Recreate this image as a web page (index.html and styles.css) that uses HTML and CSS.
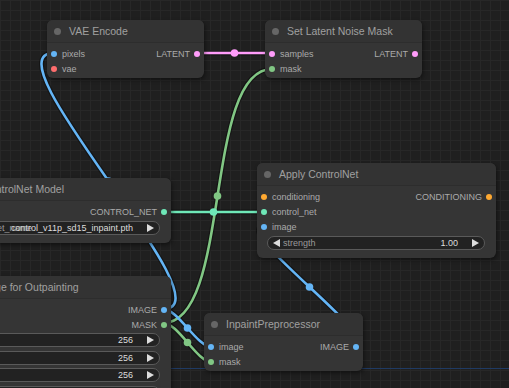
FILE: index.html
```html
<!DOCTYPE html>
<html>
<head>
<meta charset="utf-8">
<link rel="stylesheet" href="styles.css">
</head>
<body>
<div class="canvas">
  <div class="hline"></div>
  <svg class="links" width="509" height="388" viewBox="0 0 509 388">
    <g class="border">
      <path d="M197 53 L272 53"/>
      <path d="M163 309 C233 309 -16 53 54 53"/>
      <path d="M163 323 C232 323 203 69 272 69"/>
      <path d="M163 212 L264 212"/>
      <path d="M163 309 C178.5 309 196.5 347 212 347"/>
      <path d="M163 323 C178.5 323 196.5 362 212 362"/>
      <path d="M355 347 C392.6 347 226.4 227 264 227"/>
    </g>
    <g class="wires">
      <path class="w-latent" d="M197 53 L272 53"/>
      <path class="w-image" d="M163 309 C233 309 -16 53 54 53"/>
      <path class="w-mask" d="M163 323 C232 323 203 69 272 69"/>
      <path class="w-cnet" d="M163 212 L264 212"/>
      <path class="w-image" d="M163 309 C178.5 309 196.5 347 212 347"/>
      <path class="w-mask" d="M163 323 C178.5 323 196.5 362 212 362"/>
      <path class="w-image" d="M355 347 C392.6 347 226.4 227 264 227"/>
    </g>
    <g class="marks">
      <circle class="f-latent" cx="234.5" cy="53" r="3.8"/>
      <circle class="f-image" cx="108.5" cy="181" r="3.8"/>
      <circle class="f-mask" cx="217.5" cy="196" r="3.8"/>
      <circle class="f-cnet" cx="213.5" cy="212" r="3.8"/>
      <circle class="f-image" cx="187.5" cy="328" r="3.8"/>
      <circle class="f-mask" cx="187.5" cy="342.5" r="3.8"/>
      <circle class="f-image" cx="309.5" cy="287" r="3.8"/>
    </g>
  </svg>

  <div class="node n-vae">
    <div class="title"><span class="tdot"></span><span class="tname">VAE Encode</span></div>
    <div class="body">
      <div class="row"><div class="in"><i class="dot c-image"></i>pixels</div><div class="out">LATENT<i class="dot c-latent"></i></div></div>
      <div class="row"><div class="in"><i class="dot c-vae"></i>vae</div></div>
    </div>
  </div>

  <div class="node n-slnm">
    <div class="title"><span class="tdot"></span><span class="tname">Set Latent Noise Mask</span></div>
    <div class="body">
      <div class="row"><div class="in"><i class="dot c-latent"></i>samples</div><div class="out">LATENT<i class="dot c-latent"></i></div></div>
      <div class="row"><div class="in"><i class="dot c-mask"></i>mask</div></div>
    </div>
  </div>

  <div class="node n-cnet">
    <div class="title"><span class="tdot"></span><span class="tname">Load ControlNet Model</span></div>
    <div class="body">
      <div class="row"><div class="in"></div><div class="out">CONTROL_NET<i class="dot c-cnet"></i></div></div>
      <div class="widget">
        <svg class="arr" width="7" height="8" viewBox="0 0 7 8"><polygon points="7,0 0,4 7,8"/></svg>
        <div class="wbody"><span class="lbl">control_net_name</span><span class="val">control_v11p_sd15_inpaint.pth</span></div>
        <svg class="arr arr-r" width="7" height="8" viewBox="0 0 7 8"><polygon points="0,0 7,4 0,8"/></svg>
      </div>
    </div>
  </div>

  <div class="node n-apply">
    <div class="title"><span class="tdot"></span><span class="tname">Apply ControlNet</span></div>
    <div class="body">
      <div class="row"><div class="in"><i class="dot c-cond"></i>conditioning</div><div class="out">CONDITIONING<i class="dot c-cond"></i></div></div>
      <div class="row"><div class="in"><i class="dot c-cnet"></i>control_net</div></div>
      <div class="row"><div class="in"><i class="dot c-image"></i>image</div></div>
      <div class="widget">
        <svg class="arr" width="7" height="8" viewBox="0 0 7 8"><polygon points="7,0 0,4 7,8"/></svg>
        <div class="wbody"><span class="lbl">strength</span><span class="val">1.00</span></div>
        <svg class="arr arr-r" width="7" height="8" viewBox="0 0 7 8"><polygon points="0,0 7,4 0,8"/></svg>
      </div>
    </div>
  </div>

  <div class="node n-pad">
    <div class="title"><span class="tdot"></span><span class="tname">Pad Image for Outpainting</span></div>
    <div class="body">
      <div class="row"><div class="in"><i class="dot c-image"></i>image</div><div class="out">IMAGE<i class="dot c-image"></i></div></div>
      <div class="row"><div class="in"></div><div class="out">MASK<i class="dot c-mask"></i></div></div>
      <div class="widget">
        <svg class="arr" width="7" height="8" viewBox="0 0 7 8"><polygon points="7,0 0,4 7,8"/></svg>
        <div class="wbody"><span class="lbl">left</span><span class="val">256</span></div>
        <svg class="arr arr-r" width="7" height="8" viewBox="0 0 7 8"><polygon points="0,0 7,4 0,8"/></svg>
      </div>
      <div class="widget">
        <svg class="arr" width="7" height="8" viewBox="0 0 7 8"><polygon points="7,0 0,4 7,8"/></svg>
        <div class="wbody"><span class="lbl">top</span><span class="val">256</span></div>
        <svg class="arr arr-r" width="7" height="8" viewBox="0 0 7 8"><polygon points="0,0 7,4 0,8"/></svg>
      </div>
      <div class="widget">
        <svg class="arr" width="7" height="8" viewBox="0 0 7 8"><polygon points="7,0 0,4 7,8"/></svg>
        <div class="wbody"><span class="lbl">right</span><span class="val">256</span></div>
        <svg class="arr arr-r" width="7" height="8" viewBox="0 0 7 8"><polygon points="0,0 7,4 0,8"/></svg>
      </div>
      <div class="widget">
        <svg class="arr" width="7" height="8" viewBox="0 0 7 8"><polygon points="7,0 0,4 7,8"/></svg>
        <div class="wbody"><span class="lbl">bottom</span><span class="val">256</span></div>
        <svg class="arr arr-r" width="7" height="8" viewBox="0 0 7 8"><polygon points="0,0 7,4 0,8"/></svg>
      </div>
    </div>
  </div>

  <div class="node n-inpaint">
    <div class="title"><span class="tdot"></span><span class="tname">InpaintPreprocessor</span></div>
    <div class="body">
      <div class="row"><div class="in"><i class="dot c-image"></i>image</div><div class="out">IMAGE<i class="dot c-image"></i></div></div>
      <div class="row"><div class="in"><i class="dot c-mask"></i>mask</div></div>
    </div>
  </div>
</div>
</body>
</html>
```
FILE: styles.css
```css
* { box-sizing: border-box; margin: 0; padding: 0; }
html, body { width: 509px; height: 388px; overflow: hidden; background: #1f1f1f; }
body { font-family: "Liberation Sans", Arial, sans-serif; }

.canvas {
  position: relative;
  width: 509px;
  height: 388px;
  overflow: hidden;
  background-color: #1f1f1f;
  background-image:
    linear-gradient(#272727 1px, transparent 1px),
    linear-gradient(90deg, #272727 1px, transparent 1px);
  background-size: 10px 10px;
}

.hline { position: absolute; left: 0; right: 0; top: 368px; height: 1px; background: #1f3a63; }

.links { position: absolute; left: 0; top: 0; }
.links path { fill: none; }
.border path { stroke: rgba(0,0,0,0.35); stroke-width: 5; }
.wires path { stroke-width: 2.6; }
.w-latent { stroke: #ff9cf9; }
.w-image { stroke: #64b5f6; }
.w-mask { stroke: #81c784; }
.w-cnet { stroke: #6ee7b7; }
.f-latent { fill: #ff9cf9; }
.f-image { fill: #64b5f6; }
.f-mask { fill: #81c784; }
.f-cnet { fill: #6ee7b7; }

.node {
  position: absolute;
  background: #353535;
  border-radius: 6px;
  box-shadow: 1px 2px 4px rgba(0,0,0,0.45);
}
.n-vae { left: 47px; top: 20px; width: 157px; }
.n-slnm { left: 265px; top: 20px; width: 157px; }
.n-cnet { left: -66px; top: 178px; width: 237px; }
.n-apply { left: 257px; top: 163px; width: 239px; }
.n-pad { left: -66px; top: 276px; width: 237px; }
.n-inpaint { left: 204px; top: 313px; width: 159px; }

.title {
  height: 23px;
  display: flex;
  align-items: center;
  padding-left: 7px;
  background: #333;
  border-radius: 6px 6px 0 0;
  border-bottom: 1px solid #2d2d2d;
}
.tdot { width: 7px; height: 7px; border-radius: 50%; background: #666; flex: none; }
.tname { margin-left: 8px; font-size: 10.5px; color: #a0a0a0; white-space: nowrap; }

.body { padding: 3px 0 2px; }
.n-cnet .body, .n-apply .body { padding-bottom: 8px; }

.row {
  height: 15px;
  display: flex;
  justify-content: space-between;
  align-items: center;
  font-size: 9px;
  color: #aaa;
  white-space: nowrap;
}
.in { display: flex; align-items: center; gap: 5px; padding-left: 4px; }
.out { display: flex; align-items: center; gap: 4px; padding-right: 4px; }
.dot { display: block; width: 6px; height: 6px; border-radius: 50%; }
.c-image { background: #64b5f6; }
.c-mask { background: #81c784; }
.c-latent { background: #ff9cf9; }
.c-vae { background: #ff6e6e; }
.c-cond { background: #ffa931; }
.c-cnet { background: #6ee7b7; }

.widget {
  height: 14px;
  margin: 2px 11px 0 10px;
  display: flex;
  align-items: center;
  padding: 0 5px;
  background: #222;
  border: 1px solid #5a5a5a;
  border-radius: 7px;
  font-size: 9px;
  white-space: nowrap;
}
.widget + .widget { margin-top: 4px; }
.n-pad .widget { margin-top: 1px; }
.n-pad .widget + .widget { margin-top: 3.7px; }
.arr { flex: none; fill: #ddd; }
.arr-r { margin-left: 14px; }
.wbody { flex: 1; display: grid; margin-left: 3px; min-width: 0; }
.wbody > span { grid-area: 1 / 1; }
.lbl { justify-self: start; color: #999; }
.val { justify-self: end; color: #ddd; }
```
